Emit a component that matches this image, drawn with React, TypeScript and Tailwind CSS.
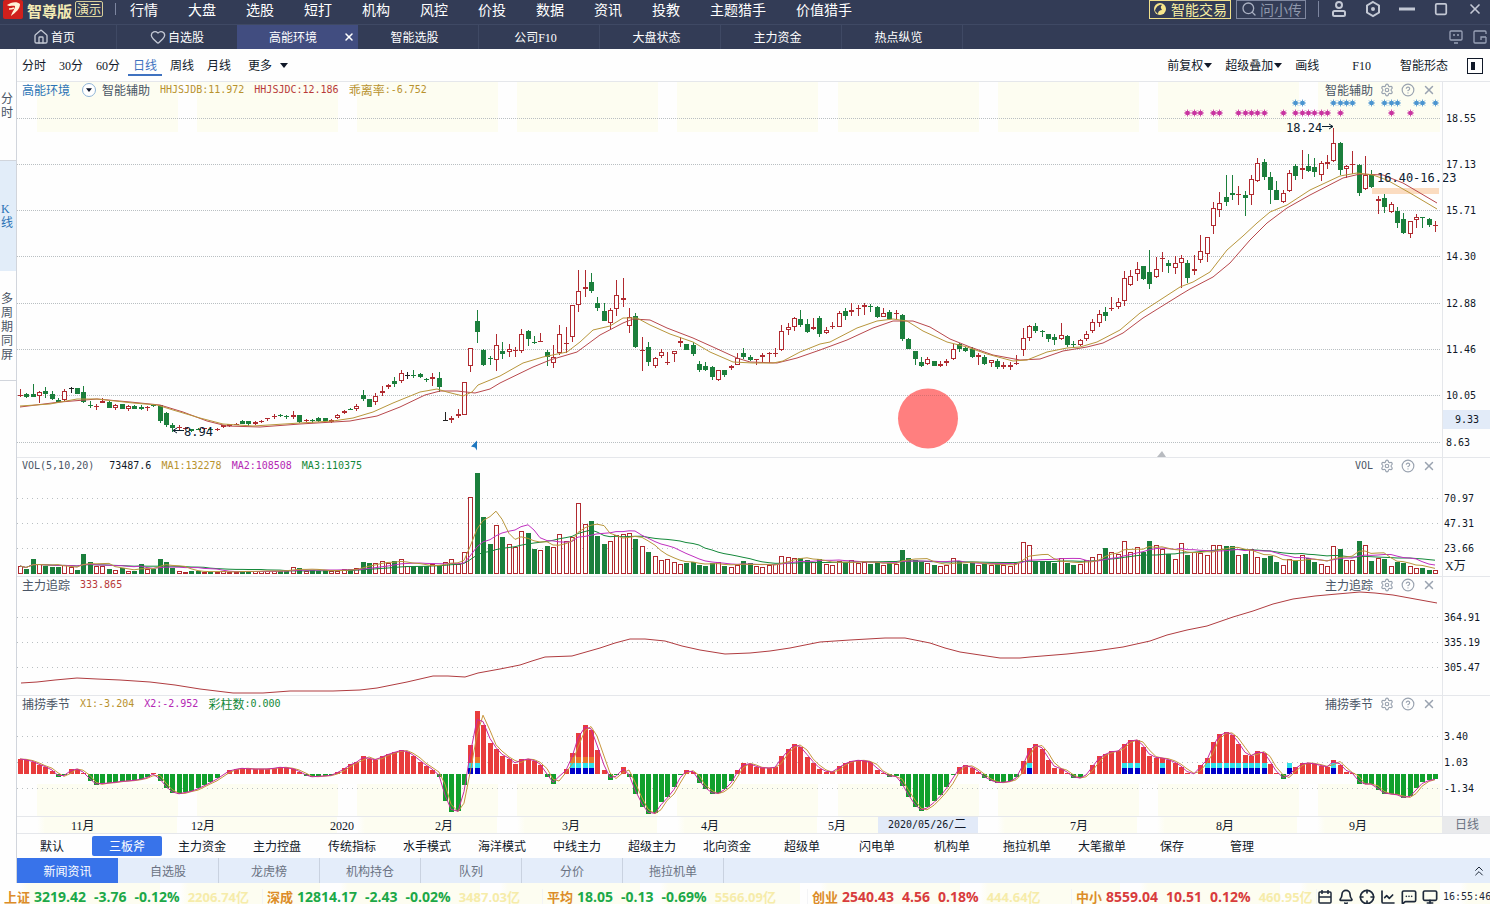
import React from 'react';
import {
  Home,
  Heart,
  X,
  Search,
  Settings,
  CircleHelp,
  Bell,
  Crosshair,
  ChartLine,
  ChevronsUp,
  Monitor,
  MessageSquareMore,
  Square,
} from 'lucide-react';

const STEP = 6.345;
const barX = (i: number) => Math.round(20 + STEP * i);

type Candle = { kind: string; high: number; top: number; bottom: number; low: number };

// each entry: r(ise) / g(fall) / k(flat), then high, body top, body bottom, low in thirds of a pixel below `base`
const parseCandles = (base: number, text: string): Candle[] =>
  text
    .trim()
    .split(/\s*,\s*/)
    .map((entry) => {
      const [kind, ...values] = entry.split(' ');
      const [high, top, bottom, low] = values.map((v) => Math.round(base + Number(v) / 3));
      return { kind, high, top, bottom, low };
    });

const candles: Candle[] = [
  ...parseCandles(
    280,
    `r 326 345 347 350, g 340 342 350 355, g 312 342 350 350, r 332 337 347 370, g 322 334 342 355, g 334 342 356 360,
    g 355 360 367 367, r 328 333 361 362, k 322 323 323 338, g 325 325 341 342, g 318 336 366 370, g 363 376 378 383,
    r 372 378 380 390, r 354 364 368 370, g 363 366 383 384, r 373 374 383 390, g 373 373 386 388, r 375 379 386 392,
    g 376 378 386 388, g 374 381 388 390, r 377 381 383 392, g 372 375 377 380, g 376 376 422 430, g 395 398 434 440,
    g 428 436 444 455, r 434 440 443 450, r 440 443 444 448, g 446 448 452 456, g 444 446 447 448, r 443 445 446 450,
    g 444 446 447 449, r 445 446 446 452, r 436 436 442 445, r 431 433 437 440, r 430 432 434 436, g 420 424 431 433,
    g 423 424 432 438, r 424 427 433 436, r 421 422 422 428, r 414 415 415 422, r 402 408 410 418, g 403 406 408 410,
    g 405 409 411 418, r 394 405 412 416, g 405 406 425 428, r 418 421 424 426, g 417 420 424 430, g 411 415 424 426,
    g 413 415 423 424, r 416 419 427 430, r 402 405 415 416, r 391 394 400 402, g 384 387 389 391, r 373 379 388 392,
    g 330 346 356 363, g 357 358 380 381, r 340 349 367 374, r 318 332 338 348, r 311 314 320 326, g 290 303 312 320,
    r 270 279 304 309, k 275 286 288 297, g 270 285 287 294, g 279 282 291 293, g 295 296 296 306, r 280 292 298 318,
    g 277 294 321 335, k 397 421 421 423, r 407 415 421 430, r 386 401 409 414, r 307 307 404 405, r 205 205 257 275,
    g 90 124 155 190`,
  ),
  ...parseCandles(
    250,
    `g 297 300 345 347, g 317 323 325 345, r 252 286 331 364, g 275 304 312 326, r 282 298 307 320, r 290 299 301 322,
    r 238 253 304 308, g 240 244 266 288, g 258 276 278 283, r 248 273 275 276, g 300 306 320 347, r 286 322 338 353,
    r 225 253 310 315, r 230 279 281 308, r 165 166 260 275, r 60 124 166 185, r 60 112 118 142, g 70 96 122 130,
    g 142 160 173 182, g 160 184 212 213, r 175 181 220 236, r 90 136 178 197, r 84 145 151 170, r 175 202 229 250,
    g 190 198 290 293, r 262 299 301 363, g 276 292 335 348, r 322 325 347 355, r 298 307 319 323, r 307 336 338 346,
    r 303 304 311 337, r 262 274 279 290, g 283 283 299 300, g 276 286 311 317, g 334 342 359 366, g 337 348 359 363,
    g 348 350 380 391, r 361 361 391 392, g 360 361 374 382, r 346 349 355 359, r 310 325 345 346, g 295 308 320 326,
    g 314 320 329 332, r 327 328 328 345, r 308 314 322 335, r 306 310 311 340, r 294 309 311 320, r 225 244 301 303,
    r 220 232 241 256, r 202 205 230 242, g 181 208 224 230, g 208 222 245 250, r 205 232 238 240`,
  ),
  ...parseCandles(
    280,
    `g 108 114 161 172, r 140 151 160 161, r 127 138 140 147, r 93 100 140 141, g 84 94 107 119, r 70 90 97 107,
    r 75 85 87 108, r 70 76 82 104, g 71 78 80 95, g 78 82 112 113, r 85 100 110 112, g 90 97 116 118,
    r 90 100 102 118, g 102 105 177 182, g 175 178 206 208, g 213 214 238 256, g 232 246 257 260, r 232 238 253 254,
    g 243 243 257 259, r 243 251 257 260, r 237 244 250 257, r 193 208 238 240, g 189 192 206 215, g 200 205 212 215,
    g 202 208 230 234, r 220 224 230 256, g 226 232 251 255, r 240 241 248 262, g 237 243 261 266, r 246 256 262 266,
    r 247 254 260 270, r 226 249 251 254, r 144 175 211 228, r 136 139 175 184, g 130 138 152 158, g 150 153 155 172,
    g 162 163 177 185, g 163 171 179 194, r 128 166 176 181, g 165 168 194 200, g 182 192 194 200, r 178 181 194 198,
    r 152 163 178 182, r 118 127 154 160, r 90 103 130 140, g 82 97 107 122`,
  ),
  ...parseCandles(
    80,
    `r 650 684 686 692, r 653 667 682 687, r 573 595 664 677, r 571 589 616 617, r 545 568 583 604, g 557 559 596 601,
    g 510 577 613 626, r 532 568 590 594, r 516 534 536 577, g 540 549 559 580, r 528 550 565 583, r 526 535 550 623,
    g 541 549 594 608, r 524 568 574 584, r 465 514 541 549, r 471 472 523 545, r 366 385 439 463, r 335 370 391 412,
    g 285 351 365 377, g 285 340 346 360, r 318 341 346 374, g 333 346 353 407, r 286 298 346 374, r 234 250 304 305,
    g 238 246 290 300, g 276 291 329 371, g 303 330 359 360, r 330 340 365 370, r 270 280 334 335, g 253 259 287 300,
    r 211 265 271 298, g 222 259 272 275, g 235 262 275 290, r 242 250 286 302, r 226 247 253 266, r 145 190 244 245,
    g 186 190 269 285, r 256 259 268 294, r 213 252 254 283, g 253 256 338 347, r 228 286 326 331, g 271 285 320 323,
    r 347 357 363 402, g 342 354 380 400, r 366 373 397 398, g 381 394 428 443, g 398 416 460 463, r 424 424 463 473,
    r 401 412 421 445, g 410 412 413 443, g 415 416 434 441, r 424 435 437 455`,
  ),
];

const volumes = [
  8, 5, 15, 10, 8, 7, 7, 9, 7, 4, 20, 12, 8, 8, 5, 4, 6, 3, 3, 10, 5, 5, 15, 12, 6, 3, 2, 3, 3, 2, 2, 2, 3, 2, 2, 3, 3, 3,
  3, 3, 3, 3, 4, 7, 6, 3, 4, 3, 4, 3, 3, 5, 5, 6, 12, 11, 11, 13, 11, 13, 15, 8, 8, 8, 8, 10, 9, 12, 15, 10, 22, 77, 101,
  57, 30, 49, 37, 30, 27, 43, 41, 25, 24, 28, 27, 40, 33, 37, 71, 50, 53, 38, 30, 33, 39, 40, 41, 35, 28, 22, 18, 14, 15,
  12, 10, 11, 12, 9, 8, 11, 12, 8, 7, 9, 13, 11, 8, 7, 9, 10, 18, 17, 16, 16, 14, 12, 15, 10, 9, 13, 12, 14, 11, 12, 10,
  12, 9, 11, 10, 24, 16, 14, 12, 11, 9, 8, 9, 16, 13, 10, 11, 9, 10, 9, 10, 9, 8, 11, 32, 29, 13, 12, 12, 11, 16, 11, 9,
  10, 14, 17, 20, 26, 22, 20, 33, 22, 27, 22, 33, 29, 25, 20, 15, 31, 19, 22, 21, 19, 29, 29, 28, 28, 19, 20, 25, 17, 16,
  18, 12, 9, 15, 13, 19, 16, 12, 10, 8, 28, 25, 14, 14, 33, 29, 13, 16, 15, 8, 12, 11, 8, 6, 6, 4, 4,
];

const season = [
  15, 14, 12, 9, 7, 3, -3, -1, 5, 5, 1, -7, -11, -9, -9, -8, -7, -7, -6, -5, -3, 1, -7, -14, -19, -20, -18, -17, -14, -11,
  -8, -4, 0, 4, 5, 6, 5, 5, 5, 5, 6, 7, 6, 5, 2, -2, -3, -2, -2, -1, 2, 6, 10, 12, 18, 15, 14, 18, 20, 22, 24, 22, 18, 12,
  8, 4, -3, -27, -38, -37, -11, 29, 63, 49, 31, 25, 18, 15, 10, 15, 15, 13, 9, -3, -10, 0, 5, 21, 41, 49, 44, 24, 4, -6,
  -1, 7, -3, -20, -33, -40, -39, -28, -23, -13, -1, 4, 2, -9, -15, -20, -19, -15, -7, 4, 11, 10, 7, 6, 6, 7, 18, 25, 30,
  27, 17, 11, 5, 2, 2, 8, 11, 13, 14, 13, 12, 4, 1, -3, -2, -12, -23, -33, -37, -33, -27, -21, -13, -1, 7, 9, 6, 2, -4,
  -7, -9, -8, -7, -3, 13, 26, 30, 25, 14, 6, 5, 1, -4, -4, 0, 9, 18, 20, 23, 23, 30, 34, 34, 27, 18, 16, 16, 14, 11, 7, 1,
  0, 9, 16, 32, 40, 42, 39, 30, 19, 18, 23, 21, 10, 1, -5, 0, 7, 11, 11, 10, 8, 7, 14, 9, 2, 1, -10, -10, -10, -16, -20,
  -20, -21, -24, -22, -14, -8, -6, -5,
];

const coloured = [
  71, 72, 87, 88, 89, 90, 159, 174, 175, 176, 180, 187, 188, 189, 190, 191, 192, 193, 194, 195, 196, 200, 207,
];
const warmTops = [72, 87, 88, 89, 90];

const blueStars = [201, 202, 207, 208, 209, 210, 213, 215, 216, 217, 220, 221, 223];
const pinkStars = [184, 185, 186, 188, 189, 192, 193, 194, 195, 196, 199, 201, 202, 203, 204, 205, 206, 208, 216, 219];

const goldLine =
  '20,406 50,404 77,399 97,399 133,403 157,405 173,410 200,418 223,424 253,426 300,423 333,421 353,418 373,412 393,403 420,392 437,389 447,392 463,396 472,392 478,385 500,376 523,363 543,357 567,352 580,342 593,330 610,326 623,318 637,318 650,325 670,334 693,342 710,352 733,362 753,363 773,363 783,361 800,352 820,344 830,342 857,328 877,321 893,319 907,321 923,331 947,342 967,347 987,354 1013,361 1027,360 1047,352 1067,348 1080,347 1097,342 1120,330 1140,313 1160,300 1180,287 1193,282 1210,272 1227,250 1243,236 1257,223 1270,212 1287,205 1310,190 1340,176 1357,173 1373,175 1387,180 1410,193 1437,209';
const redLine =
  '20,407 60,402 97,399 130,402 160,405 183,412 207,421 227,426 260,427 300,424 350,421 377,416 400,407 425,395 440,391 457,391 475,393 490,389 500,383 533,367 550,360 577,352 600,335 623,323 633,319 650,320 667,328 693,338 713,347 737,358 750,362 777,363 797,358 820,350 847,340 873,328 893,321 913,321 930,327 950,339 970,347 993,355 1020,360 1040,359 1063,351 1087,347 1103,343 1123,333 1143,318 1180,295 1190,289 1213,277 1230,263 1250,240 1267,223 1287,208 1310,195 1343,178 1360,174 1383,175 1403,183 1437,203';
const trackLine =
  '21,683 37,682 55,680 77,678 97,679 120,680 150,682 175,685 200,689 233,693 263,693 290,691 333,691 360,690 377,688 392,685 407,682 420,679 433,676 448,676 465,677 478,673 500,669 520,665 532,661 545,657 572,656 586,652 600,648 615,643 630,639 645,639 665,641 682,646 700,650 725,654 750,653 770,651 790,648 805,645 820,642 850,640 885,638 905,638 930,643 945,648 960,652 980,655 1000,658 1020,658 1030,657 1067,654 1095,651 1123,647 1150,641 1167,635 1187,630 1207,626 1233,617 1253,611 1273,604 1293,599 1315,596 1337,594 1360,592 1375,593 1393,595 1415,599 1437,603';

const average = (values: number[], span: number) =>
  values.map((_, i) => {
    const part = values.slice(Math.max(0, i - span + 1), i + 1);
    return part.reduce((sum, v) => sum + v, 0) / part.length;
  });

const toPoints = (values: number[], base: number) =>
  values.map((v, i) => `${barX(i)},${(base - v).toFixed(1)}`).join(' ');

const fastSeason = season.map((v, i) => v * 0.75 + (season[i - 1] ?? v) * 0.25);
const slowSeason = season.map((v, i) => v * 0.3 + (season[i - 1] ?? v) * 0.7);

const tint =
  'bg-[repeating-linear-gradient(90deg,#fefefe_0px,#fefefe_20px,#fdfdf1_28px,#fdfdf1_160px)]';
const mono = 'font-["DejaVu_Sans_Mono","Noto_Sans_CJK_SC",monospace]';

const menu = ['行情', '大盘', '选股', '短打', '机构', '风控', '价投', '数据', '资讯', '投教', '主题猎手', '价值猎手'];
const pages = ['智能选股', '公司F10', '大盘状态', '主力资金', '热点纵览'];
const templates = [
  '默认', '三板斧', '主力资金', '主力控盘', '传统指标', '水手模式', '海洋模式', '中线主力', '超级主力',
  '北向资金', '超级单', '闪电单', '机构单', '拖拉机单', '大笔撤单',
];
const infoTabs = ['新闻资讯', '自选股', '龙虎榜', '机构持仓', '队列', '分价', '拖拉机单'];
const months = [
  { x: 71, label: '11月' },
  { x: 191, label: '12月' },
  { x: 330, label: '2020' },
  { x: 435, label: '2月' },
  { x: 562, label: '3月' },
  { x: 701, label: '4月' },
  { x: 828, label: '5月' },
  { x: 1070, label: '7月' },
  { x: 1216, label: '8月' },
  { x: 1349, label: '9月' },
];
const indices = [
  { name: '上证', price: '3219.42', change: '-3.76', percent: '-0.12%', turnover: '2206.74亿', up: false, width: 'w-[263px]' },
  { name: '深成', price: '12814.17', change: '-2.43', percent: '-0.02%', turnover: '3487.03亿', up: false, width: 'w-[280px]' },
  { name: '平均', price: '18.05', change: '-0.13', percent: '-0.69%', turnover: '5566.09亿', up: false, width: 'w-[265px]' },
  { name: '创业', price: '2540.43', change: '4.56', percent: '0.18%', turnover: '444.64亿', up: true, width: 'w-[264px]' },
  { name: '中小', price: '8559.04', change: '10.51', percent: '0.12%', turnover: '460.95亿', up: true, width: 'w-[245px]' },
];

const Caret: React.FC = () => (
  <svg viewBox="0 0 8 5" className="w-2 h-[5px] fill-current">
    <path d="M0 0h8L4 5z" />
  </svg>
);

const PanelTools: React.FC<{ name: string }> = ({ name }) => (
  <div className="ml-auto mr-[54px] flex items-center gap-[7px] text-[#9aa3b0]">
    <span className={name === 'VOL' ? `text-[10px] text-gray-600 ${mono}` : 'text-gray-600'}>{name}</span>
    <button aria-label={`${name}设置`}><Settings className="w-3.5 h-3.5" strokeWidth={2} /></button>
    <button aria-label={`${name}帮助`}><CircleHelp className="w-3.5 h-3.5" strokeWidth={2} /></button>
    <button aria-label={`${name}关闭`}><X className="w-3.5 h-3.5" strokeWidth={2.5} /></button>
  </div>
);

type PanelProps = { top: number; height: number; head: React.ReactNode; name: string; children: React.ReactNode };

const Panel: React.FC<PanelProps> = ({ top, height, head, name, children }) => (
  <section className="relative border-b border-gray-200">
    <div className="absolute inset-x-0 top-0 flex items-center h-4 pl-[5px] text-xs leading-4">
      {head}
      <PanelTools name={name} />
    </div>
    <svg viewBox={`17 ${top} 1473 ${height}`} className="block w-full h-auto">
      {children}
      <path d={`M1442.5 ${top}v${height}`} stroke="#e5e7eb" />
    </svg>
  </section>
);

const Grid: React.FC<{ rows: [number, string][]; dash: string; x?: number }> = ({ rows, dash, x = 1444 }) => (
  <g>
    {rows.map(([y, label]) => (
      <g key={label}>
        <path d={`M17 ${y + 0.5}H1440`} stroke="#b9bfc2" strokeDasharray={dash} shapeRendering="crispEdges" />
        <text x={x} y={y + 4} className={`text-[10px] fill-gray-900 ${mono}`}>{label}</text>
      </g>
    ))}
  </g>
);

const Star: React.FC<{ index: number; y: number; color: string }> = ({ index, y, color }) => {
  const x = barX(index) + 0.5;
  return (
    <g stroke={color} fill={color}>
      <circle cx={x} cy={y} r="1.8" />
      <path d={`M${x - 3.5} ${y}h7M${x} ${y - 3.5}v7M${x - 2.5} ${y - 2.5}l5 5M${x - 2.5} ${y + 2.5}l5 -5`} strokeWidth="0.8" />
    </g>
  );
};

const PriceChart: React.FC = () => (
  <Panel
    top={82}
    height={375}
    name="智能辅助"
    head={
      <>
        <span className="text-[#2a72b5]">高能环境</span>
        <button aria-label="选择指标" className="ml-3 mr-1.5 flex items-center justify-center w-3.5 h-3.5 rounded-full border border-[#8fb4d8] bg-white text-slate-900">
          <svg viewBox="0 0 8 5" className="w-1.5 h-1 fill-current"><path d="M0 0h8L4 5z" /></svg>
        </button>
        <span className="text-gray-600">智能辅助</span>
        <span className={`ml-2.5 text-[10px] text-[#b8922e] ${mono}`}>HHJSJDB:11.972</span>
        <span className={`ml-2.5 text-[10px] text-[#b83a3a] ${mono}`}>HHJSJDC:12.186</span>
        <span className="ml-2.5 text-[#b8922e]">乖离率</span>
        <span className={`text-[10px] text-[#b8922e] ${mono}`}>:-6.752</span>
      </>
    }
  >
    {[37, 197, 357, 517, 677, 838, 998, 1158, 1318].map((x) => (
      <rect key={x} x={x} y="82" width={x === 1318 ? 122 : 141} height="50" fill="#fdfdf1" />
    ))}
    <Grid
      x={1446}
      dash="1 1"
      rows={[
        [118, '18.55'], [164, '17.13'], [210, '15.71'], [256, '14.30'],
        [303, '12.88'], [349, '11.46'], [395, '10.05'], [442, '8.63'],
      ]}
    />
    <rect x="1443" y="410" width="47" height="19" fill="#e2ebf8" />
    <text x="1455" y="423" className={`text-[10px] fill-gray-900 ${mono}`}>9.33</text>
    <rect x="1372" y="188" width="67" height="6" fill="#fbdcc0" />
    <g shapeRendering="crispEdges">
      {candles.map((c, i) => {
        const x = barX(i);
        const color = c.kind === 'r' ? '#b02a30' : c.kind === 'g' ? '#1b7f3c' : '#222';
        const hollow = c.kind === 'r' && c.bottom - c.top > 1;
        return (
          <g key={i} fill={color}>
            <rect x={x} y={c.high} width="1" height={Math.max(1, c.low - c.high)} />
            {hollow ? (
              <rect x={x - 1.5} y={c.top + 0.5} width="4" height={c.bottom - c.top - 1} fill="#fff" stroke={color} />
            ) : (
              <rect x={x - 2} y={c.top} width="5" height={Math.max(1, c.bottom - c.top)} />
            )}
          </g>
        );
      })}
    </g>
    <polyline points={redLine} fill="none" stroke="#b8484c" />
    <polyline points={goldLine} fill="none" stroke="#b8963c" />
    {blueStars.map((i) => <Star key={i} index={i} y={103} color="#4a94d0" />)}
    {pinkStars.map((i) => <Star key={i} index={i} y={113} color="#c832a0" />)}
    <g className={`text-[12px] fill-[#0c2030] ${mono}`}>
      <text x="1286" y="132">18.24</text>
      <text x="1377" y="182">16.40-16.23</text>
      <text x="184" y="436">8.94</text>
    </g>
    <path d="M1322 126.5h11m-4 -2.5l4 2.5l-4 2.5M184 430.5h-11m4 -2.5l-4 2.5l4 2.5" fill="none" stroke="#0c2030" />
    <path d="M471 446.5l6 -6v10l-2 -3z" fill="#1f78c0" />
    <circle cx="928" cy="418.5" r="30" fill="#ff7f7f" />
    <path d="M910 395.5h36" stroke="#d87070" strokeDasharray="1 1" />
    <path d="M1157 457l5 -6l4 6z" fill="#b8bbc0" />
  </Panel>
);

const VolumeChart: React.FC = () => (
  <Panel
    top={458}
    height={118}
    name="VOL"
    head={
      <div className={`flex gap-2.5 text-[10px] ${mono}`}>
        <span className="text-gray-600 mr-[5px]">VOL(5,10,20)</span>
        <span className="text-gray-900">73487.6</span>
        <span className="text-[#b8922e]">MA1:132278</span>
        <span className="text-[#b428b4]">MA2:108508</span>
        <span className="text-[#14883a]">MA3:110375</span>
      </div>
    }
  >
    <Grid dash="1 4" rows={[[498, '70.97'], [523, '47.31'], [548, '23.66']]} />
    <text x="1445" y="570" className="text-[12px] fill-gray-900 font-['Liberation_Serif','Noto_Sans_CJK_SC',serif]">X万</text>
    <g shapeRendering="crispEdges">
      {volumes.map((v, i) =>
        candles[i].kind === 'g' ? (
          <rect key={i} x={barX(i) - 2} y={574 - v} width="5" height={v} fill="#1b7f3c" />
        ) : (
          <rect key={i} x={barX(i) - 1.5} y={574.5 - v} width="4" height={Math.max(1, v - 1)} fill="#fff" stroke="#b02a30" />
        ),
      )}
    </g>
    <polyline points={toPoints(average(volumes, 20), 574)} fill="none" stroke="#14883a" />
    <polyline points={toPoints(average(volumes, 10), 574)} fill="none" stroke="#c030c0" />
    <polyline points={toPoints(average(volumes, 5), 574)} fill="none" stroke="#b8963c" />
  </Panel>
);

const TrackChart: React.FC = () => (
  <Panel
    top={577}
    height={118}
    name="主力追踪"
    head={
      <>
        <span className="text-gray-600">主力追踪</span>
        <span className={`ml-2.5 text-[10px] text-[#b83a3a] ${mono}`}>333.865</span>
      </>
    }
  >
    <Grid dash="1 4" rows={[[617, '364.91'], [642, '335.19'], [667, '305.47']]} />
    <polyline points={trackLine} fill="none" stroke="#b03c40" />
  </Panel>
);

const SeasonChart: React.FC = () => (
  <Panel
    top={696}
    height={120}
    name="捕捞季节"
    head={
      <>
        <span className="text-gray-600">捕捞季节</span>
        <span className={`ml-2.5 text-[10px] text-[#b8922e] ${mono}`}>X1:-3.204</span>
        <span className={`ml-2.5 text-[10px] text-[#b428b4] ${mono}`}>X2:-2.952</span>
        <span className="ml-2.5 text-[#14883a]">彩柱数</span>
        <span className={`text-[10px] text-[#14883a] ${mono}`}>:0.000</span>
      </>
    }
  >
    {[37, 197, 357, 517, 677, 838, 998, 1158, 1318].map((x) => (
      <rect key={x} x={x} y="784" width={x === 1318 ? 122 : 141} height="32" fill="#fdfdf1" />
    ))}
    <Grid dash="1 4" rows={[[736, '3.40'], [762, '1.03'], [788, '-1.34']]} />
    <g shapeRendering="crispEdges">
      {season.map((v, i) => (
        <rect
          key={i}
          x={barX(i) - 2}
          y={v > 0 ? 774 - v : 774}
          width="5"
          height={Math.abs(v)}
          fill={v > 0 ? '#e83c3c' : '#10a02c'}
        />
      ))}
      {warmTops.map((i) => <rect key={i} x={barX(i) - 2} y="757" width="5" height="6" fill="#e8782a" />)}
      {coloured.map((i) => (
        <g key={i}>
          <rect x={barX(i) - 2} y="763" width="5" height="5" fill="#30e0e8" />
          <rect x={barX(i) - 2} y="768" width="5" height="6" fill="#0000c8" />
        </g>
      ))}
    </g>
    <polyline points={toPoints(slowSeason, 774)} fill="none" stroke="#c8963c" />
    <polyline points={toPoints(fastSeason, 774)} fill="none" stroke="#c828a0" />
  </Panel>
);

const TimeAxis: React.FC = () => (
  <svg viewBox="17 817 1473 16" className={`block w-full h-auto overflow-visible border-b border-gray-200 ${tint}`}>
    {months.map(({ x, label }) => (
      <text key={label} x={x} y="830" className="text-[12px] fill-gray-900 font-['Liberation_Serif','Noto_Sans_CJK_SC',serif]">
        {label}
      </text>
    ))}
    <rect x="878" y="817" width="100" height="16" fill="#e2eaf8" />
    <text x="888" y="828" className={`text-[10px] fill-gray-900 ${mono}`}>
      2020/05/26/<tspan className="text-[12px]">二</tspan>
    </text>
    <rect x="1442" y="817" width="48" height="16" fill="#e9eaec" />
    <text x="1455" y="829" className="text-[12px] fill-gray-500">日线</text>
  </svg>
);

const TitleBar: React.FC = () => (
  <header className="bg-[#333c56] text-white">
    <div className="flex items-center h-[25px] pb-[6px] pl-[3px] pr-[7px] border-b border-[#3f4964]">
      <svg viewBox="0 0 20 19" className="w-5 h-[19px]">
        <rect width="20" height="19" rx="2" fill="#d0201c" />
        <path d="M4 5C8 2 14 1 17 4C17 9 13 12 8 16C9 12 12 9 12 6C9 5 7 7 4 5z" fill="#fff3d8" />
        <path d="M6 9c2 0 3 0 5-1" stroke="#fff3d8" strokeWidth="1.5" fill="none" />
      </svg>
      <span className="self-start ml-1 text-[15px] leading-[22px] font-bold text-[#f3ebb4]">智尊版</span>
      <span className="ml-[3px] px-px text-xs leading-[14px] border border-[#d8cf9a] rounded-xs text-[#f3ebb4]">演示</span>
      <span className="ml-3 h-3 w-px bg-[#7d86a0]" />
      <nav className="ml-[14px] flex gap-[30px] text-sm leading-[18px]">
        {menu.map((item) => <a key={item} href="#" className="whitespace-nowrap">{item}</a>)}
      </nav>
      <button className="ml-auto flex items-center gap-1 h-[19px] px-[3px] border border-[#f0e08c] text-sm leading-none text-[#f7eea2]">
        <svg viewBox="0 0 14 14" className="w-3.5 h-3.5">
          <circle cx="7" cy="7" r="6" fill="#f7e68c" />
          <path d="M2 9C3 4 7 2 9 3C7 5 8 6 9 8C7 8 5 9 5 12" fill="#333c56" />
        </svg>
        智能交易
      </button>
      <label className="ml-[5px] flex items-center gap-[3px] h-[19px] w-[70px] px-1 border border-[#8088a0] text-[#a9b0c2]">
        <Search className="w-4 h-4 shrink-0" />
        <input aria-label="问小传" placeholder="问小传" className="w-full min-w-0 text-sm leading-none bg-transparent outline-none placeholder:text-[#8f97ab]" />
      </label>
      <span className="mx-3 h-4 w-px bg-[#7d86a0]" />
      <div className="flex items-center gap-[18px] text-[#c3c8d4]">
        <button aria-label="用户">
          <svg viewBox="0 0 16 18" className="w-4 h-[18px] fill-none stroke-current stroke-2">
            <circle cx="8" cy="5" r="3" />
            <rect x="2" y="11" width="12" height="5" rx="1.5" />
          </svg>
        </button>
        <button aria-label="设置">
          <svg viewBox="0 0 16 18" className="w-4 h-[18px] fill-none stroke-current stroke-2">
            <path d="M8 2l6 3.5v7L8 16l-6-3.5v-7z" />
            <circle cx="8" cy="9" r="1" />
          </svg>
        </button>
        <button aria-label="最小化">
          <svg viewBox="0 0 16 16" className="w-4 h-4 stroke-current"><path d="M0 8h16" strokeWidth="3" /></svg>
        </button>
        <button aria-label="最大化"><Square className="w-4 h-3.5" strokeWidth={3} /></button>
        <button aria-label="关闭"><X className="w-4 h-4" strokeWidth={2.5} /></button>
      </div>
    </div>
    <div className="flex h-6 text-xs">
      <a href="#" className="flex items-center justify-center gap-0.5 w-[117px] pr-2 border-r border-[#3f4964]">
        <Home className="w-4 h-4 text-[#c3c8d4]" strokeWidth={2} />首页
      </a>
      <a href="#" className="flex items-center justify-center gap-0.5 w-[120px]">
        <Heart className="w-4 h-4 text-[#c3c8d4]" strokeWidth={2} />自选股
      </a>
      <div className="flex items-center w-[121px] pl-8 pr-[3px] bg-[#414d80]">
        <a href="#">高能环境</a>
        <button aria-label="关闭高能环境" className="ml-auto"><X className="w-3 h-3" strokeWidth={3} /></button>
      </div>
      {pages.map((page) => (
        <a key={page} href="#" className="flex items-center justify-center w-[121px] pt-px pr-[7px] border-r border-[#3f4964] font-['Liberation_Serif','Noto_Sans_CJK_SC',serif]">
          {page}
        </a>
      ))}
      <div className="ml-auto flex items-center gap-2 pr-0.5 text-[#9aa2b8]">
        <button aria-label="消息">
          <svg viewBox="0 0 16 16" className="w-4 h-4 fill-none stroke-current">
            <rect x="2" y="2" width="12" height="9" rx="1" strokeWidth="1.3" />
            <path d="M5 6h2M9 6h2M6 14h4" strokeWidth="1.3" />
          </svg>
        </button>
        <button aria-label="布局">
          <svg viewBox="0 0 16 16" className="w-4 h-4 fill-none stroke-current">
            <path d="M14 5V3Q14 2 13 2H3Q2 2 2 3V13Q2 14 3 14H13Q14 14 14 13V8M14 8H9V11" strokeWidth="1.3" />
          </svg>
        </button>
      </div>
    </div>
  </header>
);

const Toolbar: React.FC = () => (
  <div className="flex items-center h-[33px] pt-px pl-[5px] pr-[7px] border-b border-gray-200 text-xs text-gray-900 font-['Liberation_Serif','Noto_Sans_CJK_SC',serif]">
    <div className="flex items-center gap-[13px]">
      <button>分时</button>
      <button>30分</button>
      <button>60分</button>
      <button className="-mx-[5px] px-[5px] border-y-2 border-t-transparent border-b-[#3f72c0] text-[#3f72c0] leading-4">日线</button>
      <button>周线</button>
      <button>月线</button>
      <button className="ml-1 flex items-center gap-2">更多<Caret /></button>
    </div>
    <div className="ml-auto flex items-center gap-[13px]">
      <button className="flex items-center gap-px">前复权<Caret /></button>
      <button className="flex items-center gap-px">超级叠加<Caret /></button>
      <button>画线</button>
      <button className="ml-5">F10</button>
      <button className="ml-4">智能形态</button>
      <button aria-label="侧栏" className="ml-1.5 w-4 h-4 border border-gray-900 p-[3px]">
        <span className="block w-1 h-2 bg-gray-900" />
      </button>
    </div>
  </div>
);

const StatusBar: React.FC = () => (
  <footer className={`flex items-center h-[22px] pt-1.5 whitespace-nowrap overflow-hidden ${tint}`}>
    {indices.map((item) => (
      <div
        key={item.name}
        className={`shrink-0 flex items-center gap-2 pl-1 border-r border-gray-100 font-['Open_Sans','Noto_Sans_CJK_SC',sans-serif] text-sm leading-4 font-bold ${item.width} ${item.up ? 'text-[#d83c3c]' : 'text-[#1ca848]'}`}
      >
        <span className="flex items-center gap-1">
          <span className="text-[13px] text-[#dc8c28]">{item.name}</span>
          {item.price}
        </span>
        <span>{item.change}</span>
        <span>{item.percent}</span>
        <span className="text-[13px] text-[#f6ecaa]">{item.turnover}</span>
      </div>
    ))}
    <div className="ml-auto flex items-center gap-[5px] pr-px text-gray-800">
      <button aria-label="日历">
        <svg viewBox="0 0 16 16" className="w-4 h-4 fill-none stroke-current">
          <rect x="2" y="3" width="12" height="11" rx="1" strokeWidth="1.5" />
          <path d="M2 8h12M5 1v4M11 1v4" strokeWidth="1.5" />
        </svg>
      </button>
      <button aria-label="提醒"><Bell className="w-4 h-4" strokeWidth={2.5} /></button>
      <button aria-label="定位"><Crosshair className="w-4 h-4" strokeWidth={2.5} /></button>
      <button aria-label="走势"><ChartLine className="w-4 h-4" strokeWidth={2.5} /></button>
      <button aria-label="留言"><MessageSquareMore className="w-4 h-4" strokeWidth={2.5} /></button>
      <button aria-label="屏幕"><Monitor className="w-4 h-4" strokeWidth={2.5} /></button>
      <time className={`text-[10px] ${mono}`}>16:55:46</time>
    </div>
  </footer>
);

const App: React.FC = () => {
  return (
    <div className="min-h-screen flex flex-col bg-[#fefefe] overflow-x-hidden font-['Noto_Sans_CJK_SC',sans-serif] text-xs">
      <TitleBar />
      <div className="flex">
        <aside className="shrink-0 w-[17px] border-r border-gray-300 text-xs leading-[14px] text-gray-600">
          <a href="#" className="flex items-center h-28 pl-px border-b border-gray-300">
            <span className="w-3 break-all">分时</span>
          </a>
          <a href="#" className="flex items-center h-[110px] pl-px bg-[#e2edf9] text-[#2a72b5]">
            <span className="w-3 break-all font-['Liberation_Serif','Noto_Sans_CJK_SC',serif]">K线</span>
          </a>
          <a href="#" className="flex items-center h-[110px] pl-px border-b border-gray-300">
            <span className="w-3 break-all">多周期同屏</span>
          </a>
        </aside>
        <main className="flex-1 min-w-0">
          <Toolbar />
          <PriceChart />
          <VolumeChart />
          <TrackChart />
          <SeasonChart />
          <TimeAxis />
          <div className="flex items-center h-6 text-gray-900">
            {templates.map((item) => (
              <button
                key={item}
                className={
                  item === '三板斧'
                    ? 'shrink-0 w-[70px] h-5 mr-[5px] rounded-xs bg-[#3873ea] text-white'
                    : 'shrink-0 w-[70px] h-5 mr-[5px]'
                }
              >
                {item}
              </button>
            ))}
            <button className="w-[60px] mr-[5px]">保存</button>
            <button className="w-[70px]">管理</button>
          </div>
          <div className="flex h-[25px] bg-[#e4edfa] text-gray-500">
            {infoTabs.map((item, index) => (
              <button
                key={item}
                className={
                  index === 0
                    ? 'w-[101px] bg-[#3873ea] text-white'
                    : 'w-[101px] border-r border-[#c9d2e0]'
                }
              >
                {item}
              </button>
            ))}
            <button aria-label="展开" className="ml-auto pr-[3px] text-gray-800"><ChevronsUp className="w-4 h-4" strokeWidth={1.5} /></button>
          </div>
        </main>
      </div>
      <StatusBar />
    </div>
  );
};

export default App;
